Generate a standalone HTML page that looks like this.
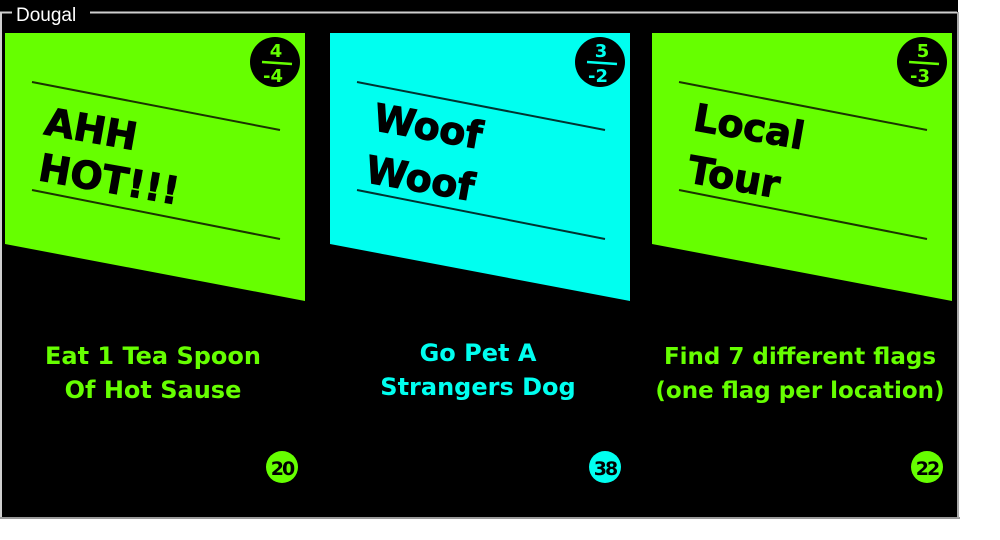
<!DOCTYPE html>
<html><head><meta charset="utf-8"><style>
html,body{margin:0;padding:0;background:#fff;width:1000px;height:540px;overflow:hidden}
</style></head><body>
<svg width="1000" height="540" viewBox="0 0 1000 540" xmlns="http://www.w3.org/2000/svg" style="display:block">
<rect x="0" y="0" width="958" height="517" fill="#000"/>
<rect x="0" y="517" width="960" height="2" fill="#9a9a9a"/>
<rect x="957" y="12" width="2" height="506" fill="#aaa"/>
<line x1="0" y1="12.5" x2="957" y2="12.5" stroke="#cfcfcf" stroke-width="2"/>
<line x1="1" y1="12" x2="1" y2="517" stroke="#cfcfcf" stroke-width="2"/>
<rect x="12" y="2" width="78" height="20" fill="#000"/>
<text x="16" y="21" font-family="Liberation Sans, sans-serif" font-size="19" fill="#fff">Dougal</text>

<g font-family="DejaVu Sans, Liberation Sans, sans-serif" font-weight="bold">
<!-- card 1 -->
<g transform="translate(5,0)">
<polygon points="0,33 300,33 300,301 0,244" fill="#66ff00"/>
<line x1="27" y1="82" x2="275" y2="130" stroke="#1a3300" stroke-width="2"/>
<line x1="27" y1="190" x2="275" y2="239" stroke="#1a3300" stroke-width="2"/>
<text transform="translate(38,134) rotate(10)" font-size="38" fill="#000" stroke="#000" stroke-width="1">AHH</text>
<text transform="translate(32,180) rotate(10)" font-size="38" fill="#000" stroke="#000" stroke-width="1">HOT!!!</text>
<circle cx="270" cy="62" r="25" fill="#000"/>
<text x="271" y="57" font-size="18" fill="#66ff00" text-anchor="middle">4</text>
<line x1="257" y1="62" x2="287" y2="64" stroke="#66ff00" stroke-width="2.5"/>
<text x="268" y="82" font-size="18" fill="#66ff00" text-anchor="middle">-4</text>
<text x="148" y="364" font-size="24" fill="#66ff00" text-anchor="middle">Eat 1 Tea Spoon</text>
<text x="148" y="398" font-size="24" fill="#66ff00" text-anchor="middle">Of Hot Sause</text>
<circle cx="277" cy="467" r="16" fill="#66ff00"/>
<text x="277" y="475" font-size="19" fill="#000" text-anchor="middle" letter-spacing="-2">20</text>
</g>
<!-- card 2 -->
<g transform="translate(330,0)">
<polygon points="0,33 300,33 300,301 0,244" fill="#00fff0"/>
<line x1="27" y1="82" x2="275" y2="130" stroke="#003330" stroke-width="2"/>
<line x1="27" y1="190" x2="275" y2="239" stroke="#003330" stroke-width="2"/>
<text transform="translate(42,130) rotate(10)" font-size="38" fill="#000" stroke="#000" stroke-width="1">Woof</text>
<text transform="translate(34,182) rotate(10)" font-size="38" fill="#000" stroke="#000" stroke-width="1">Woof</text>
<circle cx="270" cy="62" r="25" fill="#000"/>
<text x="271" y="57" font-size="18" fill="#00fff0" text-anchor="middle">3</text>
<line x1="257" y1="62" x2="287" y2="64" stroke="#00fff0" stroke-width="2.5"/>
<text x="268" y="82" font-size="18" fill="#00fff0" text-anchor="middle">-2</text>
<text x="148" y="361" font-size="24" fill="#00fff0" text-anchor="middle">Go Pet A</text>
<text x="148" y="395" font-size="24" fill="#00fff0" text-anchor="middle">Strangers Dog</text>
<circle cx="275" cy="467" r="16" fill="#00fff0"/>
<text x="275" y="475" font-size="19" fill="#000" text-anchor="middle" letter-spacing="-2">38</text>
</g>
<!-- card 3 -->
<g transform="translate(652,0)">
<polygon points="0,33 300,33 300,301 0,244" fill="#66ff00"/>
<line x1="27" y1="82" x2="275" y2="130" stroke="#1a3300" stroke-width="2"/>
<line x1="27" y1="190" x2="275" y2="239" stroke="#1a3300" stroke-width="2"/>
<text transform="translate(40,130) rotate(10)" font-size="38" fill="#000" stroke="#000" stroke-width="1">Local</text>
<text transform="translate(34,182) rotate(10)" font-size="38" fill="#000" stroke="#000" stroke-width="1">Tour</text>
<circle cx="270" cy="62" r="25" fill="#000"/>
<text x="271" y="57" font-size="18" fill="#66ff00" text-anchor="middle">5</text>
<line x1="257" y1="62" x2="287" y2="64" stroke="#66ff00" stroke-width="2.5"/>
<text x="268" y="82" font-size="18" fill="#66ff00" text-anchor="middle">-3</text>
<text x="148" y="364" font-size="23" fill="#66ff00" text-anchor="middle">Find 7 different flags</text>
<text x="148" y="398" font-size="23" fill="#66ff00" text-anchor="middle">(one flag per location)</text>
<circle cx="275" cy="467" r="16" fill="#66ff00"/>
<text x="275" y="475" font-size="19" fill="#000" text-anchor="middle" letter-spacing="-2">22</text>
</g>
</g>
</svg>
</body></html>
